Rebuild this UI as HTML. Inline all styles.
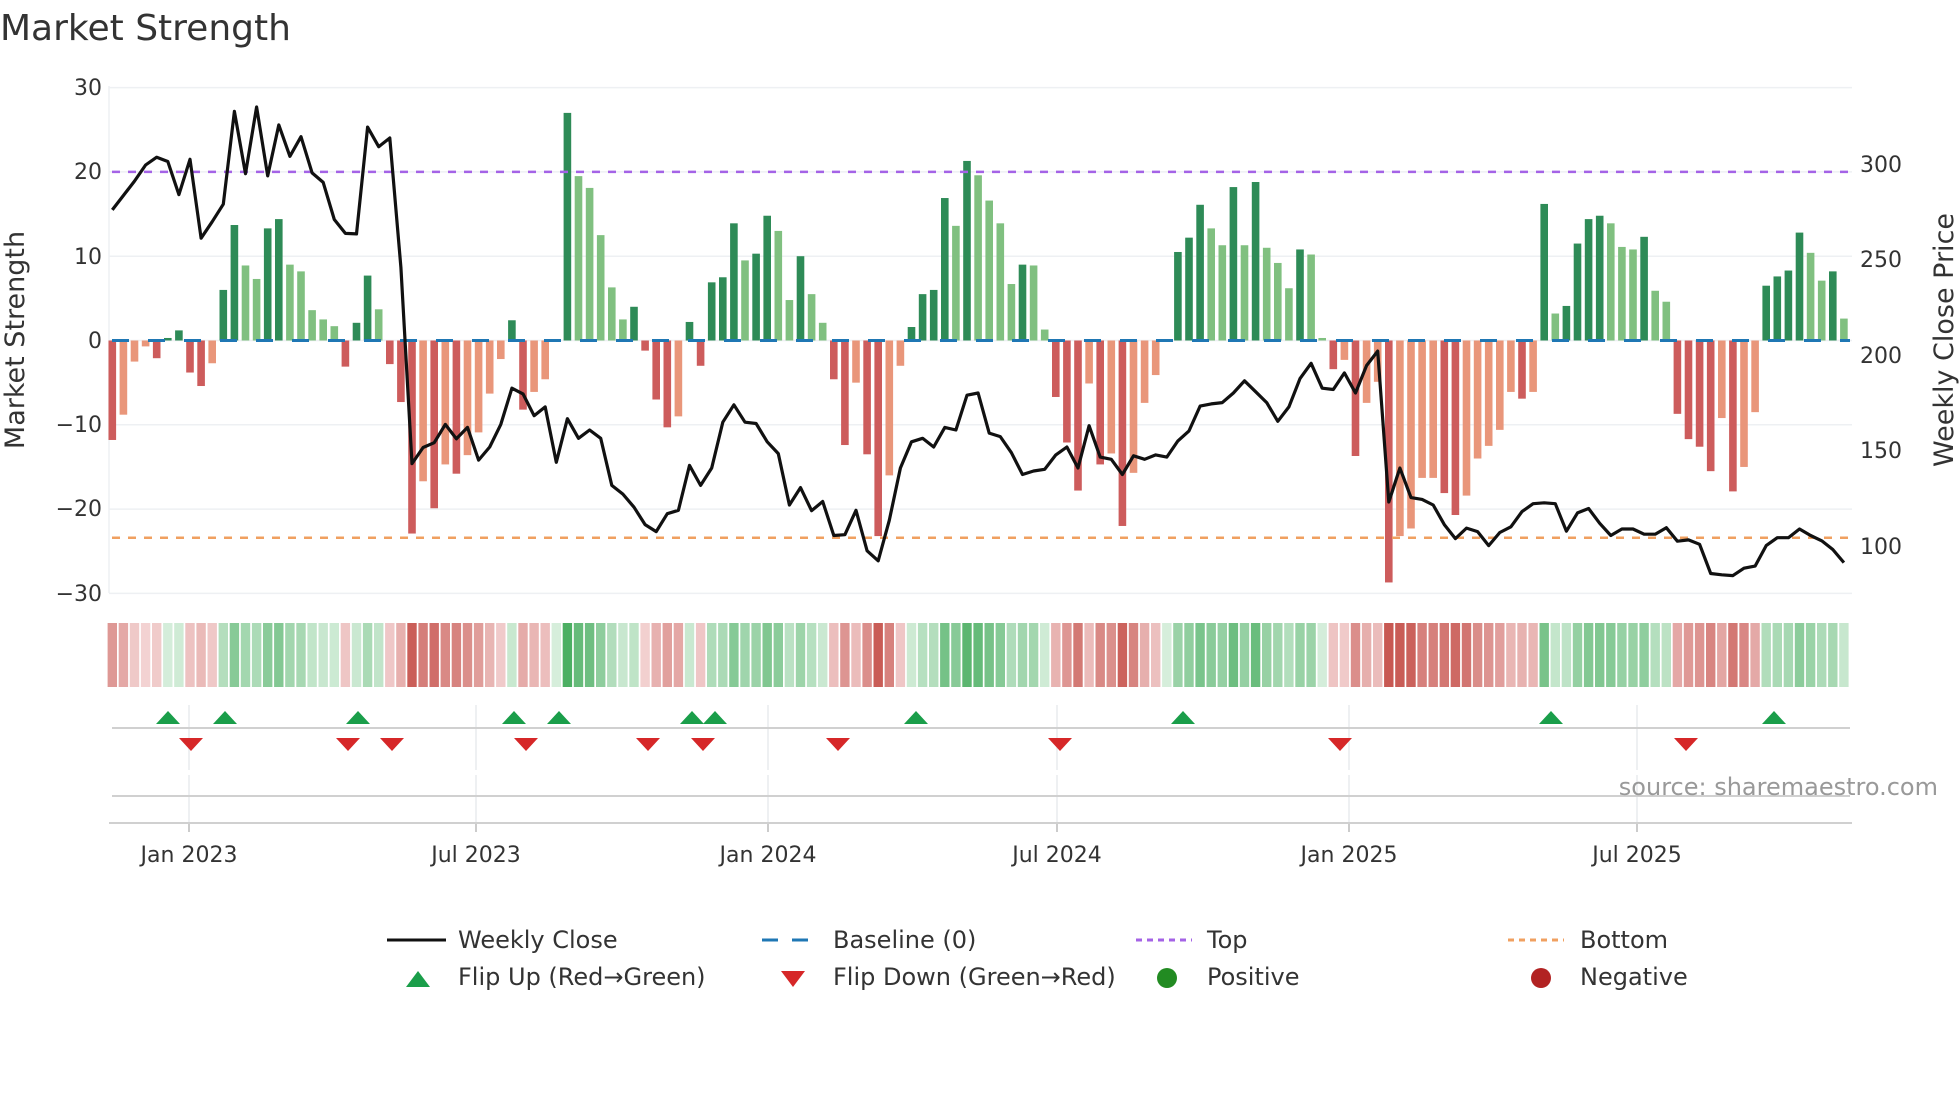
<!DOCTYPE html>
<html><head><meta charset="utf-8"><style>
html,body{margin:0;padding:0;background:#fff;}
svg{display:block;font-family:"DejaVu Sans","Liberation Sans",sans-serif;}
</style></head><body>
<svg id="s" width="1960" height="1102" viewBox="0 0 1960 1102" xmlns="http://www.w3.org/2000/svg">
<rect width="1960" height="1102" fill="#fff"/>
<text x="0" y="40" font-size="36" fill="#333">Market Strength</text>
<g id="grid" stroke="#eef0f3" stroke-width="1.5"></g>
<line x1="109" y1="86" x2="109" y2="593" stroke="#eef0f3" stroke-width="1.5"/>
<g id="bars"></g>
<g id="base"></g>
<line x1="112" y1="171.9" x2="1852" y2="171.9" stroke="#a463e6" stroke-width="2.5" stroke-dasharray="8,8"/>
<line x1="112" y1="537.8" x2="1852" y2="537.8" stroke="#f0a060" stroke-width="2.5" stroke-dasharray="8,8"/>
<polyline id="price" fill="none" stroke="#111" stroke-width="3.2" stroke-linejoin="round"/>
<g id="heat"></g>
<g id="vgrid" stroke="#e8eaee" stroke-width="1.5"></g>
<line x1="112" y1="728" x2="1850" y2="728" stroke="#d0d0d0" stroke-width="2"/>
<line x1="112" y1="796" x2="1850" y2="796" stroke="#d0d0d0" stroke-width="2"/>
<line x1="109" y1="823" x2="1852" y2="823" stroke="#d0d0d0" stroke-width="2"/>
<g id="marks"></g>
<g font-size="22" fill="#333" text-anchor="end">
<text x="102" y="95">30</text><text x="102" y="179">20</text><text x="102" y="264">10</text>
<text x="102" y="348">0</text><text x="102" y="432">−10</text><text x="102" y="516">−20</text><text x="102" y="601">−30</text>
</g>
<g font-size="22" fill="#333">
<text x="1860" y="172">300</text><text x="1860" y="267">250</text><text x="1860" y="363">200</text>
<text x="1860" y="458">150</text><text x="1860" y="554">100</text>
</g>
<text transform="translate(24,340) rotate(-90)" font-size="27" fill="#333" text-anchor="middle">Market Strength</text>
<text transform="translate(1953,340) rotate(-90)" font-size="27" fill="#333" text-anchor="middle">Weekly Close Price</text>
<text x="1938" y="795" font-size="24" fill="#999" text-anchor="end">source: sharemaestro.com</text>
<g font-size="22" fill="#333" text-anchor="middle">
<text x="189" y="862">Jan 2023</text><text x="476" y="862">Jul 2023</text><text x="768" y="862">Jan 2024</text>
<text x="1057" y="862">Jul 2024</text><text x="1349" y="862">Jan 2025</text><text x="1637" y="862">Jul 2025</text>
</g>
<g font-size="24" fill="#333">
<line x1="387" y1="940" x2="446" y2="940" stroke="#111" stroke-width="3"/>
<text x="458" y="948">Weekly Close</text>
<line x1="762" y1="940" x2="819" y2="940" stroke="#1f77b4" stroke-width="3" stroke-dasharray="16,14"/>
<text x="833" y="948">Baseline (0)</text>
<line x1="1136" y1="940" x2="1192" y2="940" stroke="#a463e6" stroke-width="3" stroke-dasharray="6,5"/>
<text x="1207" y="948">Top</text>
<line x1="1508" y1="940" x2="1564" y2="940" stroke="#f0a060" stroke-width="3" stroke-dasharray="6,5"/>
<text x="1580" y="948">Bottom</text>
<polygon points="406,987 430,987 418,971" fill="#1a9e4a"/>
<text x="458" y="985">Flip Up (Red→Green)</text>
<polygon points="781,971 805,971 793,987" fill="#d62728"/>
<text x="833" y="985">Flip Down (Green→Red)</text>
<circle cx="1167" cy="978" r="10" fill="#228b22"/>
<text x="1207" y="985">Positive</text>
<circle cx="1541" cy="978" r="10" fill="#b22222"/>
<text x="1580" y="985">Negative</text>
</g>
</svg>
<script>
var NS="http://www.w3.org/2000/svg";
function el(p,t,a){var e=document.createElementNS(NS,t);for(var k in a)e.setAttribute(k,a[k]);p.appendChild(e);return e;}
var B=["D-11.8","L-8.8","L-2.5","L-0.7","D-2.1","D0.3","D1.2","D-3.8","D-5.4","L-2.7",
"D6","D13.7","L8.9","L7.3","D13.3","D14.4","L9","L8.2","L3.6","L2.5",
"L1.7","D-3.1","D2.1","D7.7","L3.7","D-2.8","D-7.3","D-22.9","L-16.7","D-19.9",
"L-14.7","D-15.8","L-13.6","L-10.9","L-6.3","L-2.2","D2.4","D-8.2","L-6.1","L-4.6",
"L0","D27","L19.5","L18.1","L12.5","L6.3","L2.5","D4","D-1.2","D-7",
"D-10.3","L-9","D2.2","D-3","D6.9","D7.5","D13.9","L9.5","D10.3","D14.8",
"L13","L4.8","D10","L5.5","L2.1","D-4.6","D-12.4","L-5","D-13.5","D-23.2",
"L-16","L-3","D1.6","D5.5","D6","D16.9","L13.6","D21.3","L19.6","L16.6",
"L13.9","L6.7","D9","L8.9","L1.3","D-6.7","D-12.1","D-17.8","L-5.1","D-14.7",
"L-13.4","D-22","L-15.7","L-7.4","L-4.1","L0","D10.5","D12.2","D16.1","L13.3",
"L11.3","D18.2","L11.3","D18.8","L11","L9.2","L6.2","D10.8","L10.2","L0.3",
"D-3.4","L-2.3","D-13.7","L-7.4","L-4.9","D-28.7","L-23.2","L-22.3","L-16.3","L-16.3",
"D-18.1","D-20.7","L-18.4","L-14","L-12.5","L-10.6","L-6.1","D-6.9","L-6.1","D16.2",
"L3.2","D4.1","D11.5","D14.4","D14.8","L13.9","L11.1","L10.8","D12.3","L5.9",
"L4.6","D-8.7","D-11.7","D-12.6","D-15.5","L-9.2","D-17.9","L-15","L-8.5","D6.5",
"D7.6","D8.3","D12.8","L10.4","L7.1","D8.2","L2.6"];
var P=[298,265,232,195,177,187,263,182,363,325,285,72,215,62,220,103,175,130,213,235,320,352,353,108,153,133,430,880,843,832,790,823,797,872,842,790,707,720,770,750,877,777,822,803,822,930,950,980,1020,1036,995,987,884,930,890,785,745,785,788,830,857,975,935,988,967,1045,1043,987,1080,1103,1010,890,830,822,842,797,803,723,718,810,818,855,905,897,893,860,842,890,793,865,870,905,862,870,860,865,828,805,748,743,740,718,690,715,740,783,750,685,650,707,710,672,718,655,622,968,890,958,962,975,1020,1052,1028,1036,1068,1038,1025,990,972,970,972,1035,993,983,1017,1045,1030,1030,1042,1042,1027,1058,1055,1065,1132,1135,1137,1120,1115,1068,1050,1050,1030,1045,1057,1077,1107];
var Z=340.5,U=8.43,X0=112.3,DX=11.1;
var g=document.getElementById('grid');
for(var v=-30;v<=30;v+=10){var y=Z-v*U;el(g,'line',{x1:109,y1:y,x2:1852,y2:y});}
var b=document.getElementById('bars'),h=document.getElementById('heat');
function mix(a,c,t){return 'rgb('+a.map(function(x,i){return Math.round(x+(c[i]-x)*t)}).join(',')+')';}
for(var i=0;i<B.length;i++){
 var x=X0+i*DX,d=B[i][0]=='D',v=parseFloat(B[i].slice(1));
 var col=v>=0?(d?'#2e8b57':'#80c080'):(d?'#cd5c5c':'#e9967a');
 if(Math.abs(v)>0.05){var y1=Z-Math.max(v,0)*U,y2=Z-Math.min(v,0)*U;el(b,'rect',{x:x-3.8,y:y1,width:7.6,height:y2-y1,fill:col});}
 var t=Math.min(1,Math.abs(v)/24);
 var hc=v>=0?mix([214,238,219],[76,175,99],t):mix([244,214,214],[200,88,82],t);
 el(h,'rect',{x:x-4.7,y:623,width:9.4,height:64,fill:hc});
}
var bs=document.getElementById('base');
for(var x=112;x<1850;x+=36){el(bs,'line',{x1:x,y1:Z,x2:Math.min(x+17,1850),y2:Z,stroke:'#1f77b4','stroke-width':3});}
var pts=[];for(var i=0;i<P.length;i++){pts.push((X0+i*DX).toFixed(1)+','+(80+P[i]/2.294).toFixed(1));}
document.getElementById('price').setAttribute('points',pts.join(' '));
var vg=document.getElementById('vgrid');
[189,476,768,1057,1349,1637].forEach(function(x){el(vg,'line',{x1:x,y1:705,x2:x,y2:770});el(vg,'line',{x1:x,y1:775,x2:x,y2:823});el(vg,'line',{x1:x,y1:823,x2:x,y2:832,stroke:'#bbb'});});
var m=document.getElementById('marks');
[168,225,358,514,559,692,715,916,1183,1551,1774].forEach(function(x){el(m,'polygon',{points:(x-12)+',724 '+(x+12)+',724 '+x+',711',fill:'#1a9e4a'});});
[191,348,392,526,648,703,838,1060,1340,1686].forEach(function(x){el(m,'polygon',{points:(x-12)+',738 '+(x+12)+',738 '+x+',751',fill:'#d62728'});});
</script>
</body></html>
